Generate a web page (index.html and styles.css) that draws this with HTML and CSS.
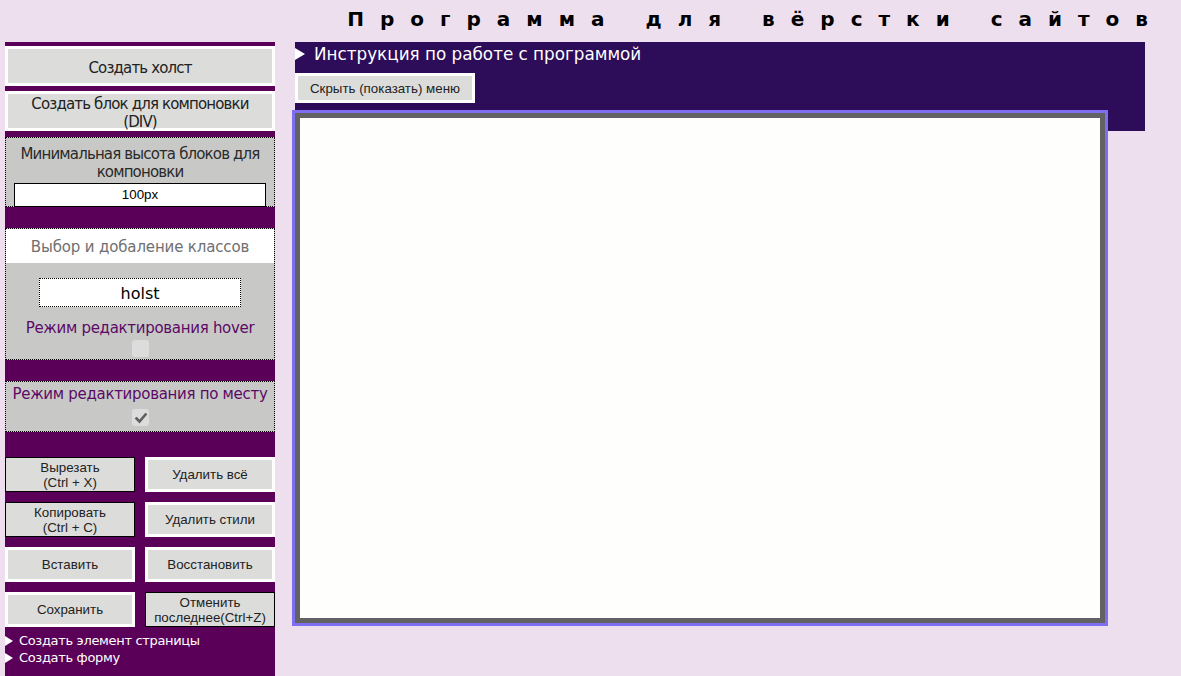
FILE: index.html
```
<!DOCTYPE html>
<html lang="ru">
<head>
<meta charset="utf-8">
<title>Программа для вёрстки сайтов</title>
<link rel="stylesheet" href="styles.css">
</head>
<body>
<div class="page-title">Программа для вёрстки сайтов</div>
<div class="layout">
  <aside class="sidebar">
    <div class="big-btn">Создать холст</div>
    <div class="big-btn two-line">Создать блок для компоновки<br>(DIV)</div>
    <div class="panel panel-height">
      <div class="panel-text">Минимальная высота блоков для компоновки</div>
      <div class="field field-height">100px</div>
    </div>
    <div class="panel panel-classes">
      <div class="panel-head">Выбор и добаление классов</div>
      <div class="field field-class">holst</div>
      <div class="mode-text">Режим редактирования hover</div>
      <span class="check"></span>
    </div>
    <div class="panel panel-place">
      <div class="mode-text">Режим редактирования по месту</div>
      <span class="check checked"><svg viewBox="0 0 16 16" width="16" height="16"><path d="M3.5 8.5 L6.5 11.5 L12.5 4.5" fill="none" stroke="#5e5e5e" stroke-width="2.6" stroke-linecap="square"/></svg></span>
    </div>
    <div class="tools">
      <div class="tool dark">Вырезать<br>(Ctrl + X)</div>
      <div class="tool">Удалить всё</div>
      <div class="tool dark">Копировать<br>(Ctrl + C)</div>
      <div class="tool">Удалить стили</div>
      <div class="tool">Вставить</div>
      <div class="tool">Восстановить</div>
      <div class="tool">Сохранить</div>
      <div class="tool dark">Отменить<br>последнее(Ctrl+Z)</div>
    </div>
    <div class="menu">
      <div class="menu-item"><span class="tri"></span>Создать элемент страницы</div>
      <div class="menu-item"><span class="tri"></span>Создать форму</div>
    </div>
  </aside>
  <main class="main">
    <div class="main-head">
      <div class="main-title"><span class="tri tri-head"></span>Инструкция по работе с программой</div>
      <div class="toggle-btn">Скрыть (показать) меню</div>
      <div class="canvas"></div>
    </div>
  </main>
</div>
</body>
</html>
```
FILE: styles.css
```
html, body {
  margin: 0;
  padding: 0;
}
body {
  background: #eddfee;
  font-family: "DejaVu Sans", Verdana, sans-serif;
  overflow: hidden;
}
.page-title {
  height: 42px;
  box-sizing: border-box;
  padding-top: 6px;
  padding-right: 17px;
  text-align: right;
  font-weight: bold;
  font-size: 20px;
  line-height: 26px;
  letter-spacing: 16px;
  word-spacing: 2px;
  color: #000;
  white-space: nowrap;
}
.layout {
  display: flex;
  align-items: flex-start;
}
.sidebar {
  margin-left: 5px;
  width: 270px;
  background: #5a0058;
  padding-top: 4px;
  padding-bottom: 30px;
  display: flex;
  flex-direction: column;
}
.big-btn {
  height: 40px;
  box-sizing: border-box;
  border: 3px solid #fff;
  background: #dcdddb;
  color: #222;
  font-size: 15px;
  line-height: 18px;
  letter-spacing: -0.85px;
  display: flex;
  align-items: center;
  justify-content: center;
  text-align: center;
  padding-top: 3px;
}
.big-btn + .big-btn {
  margin-top: 5px;
}
.big-btn.two-line {
  padding-top: 4px;
}
.panel {
  background: #c8c9c6;
  border: 1px dotted #000;
  display: flex;
  flex-direction: column;
  align-items: center;
  text-align: center;
}
.panel-height {
  margin-top: 6px;
  height: 70px;
  box-sizing: border-box;
  padding-top: 7px;
}
.panel-text {
  font-size: 15px;
  line-height: 18px;
  letter-spacing: -0.85px;
  color: #2a2a2a;
  padding: 0 2px;
}
.field {
  background: #fff;
  box-sizing: border-box;
  color: #000;
  text-align: center;
}
.field-height {
  margin-top: 2px;
  width: 252px;
  height: 24px;
  border: 1px solid #000;
  font-family: "Liberation Sans", Arial, sans-serif;
  font-size: 13.33px;
  line-height: 22px;
}
.panel-classes {
  margin-top: 21px;
  height: 132px;
  box-sizing: border-box;
}
.panel-head {
  align-self: stretch;
  height: 34px;
  background: #fff;
  color: #6f6f6f;
  font-size: 15px;
  line-height: 36px;
  letter-spacing: -0.15px;
}
.field-class {
  margin-top: 15px;
  width: 202px;
  height: 29px;
  border: 1px dotted #000;
  font-size: 16px;
  line-height: 29px;
}
.mode-text {
  color: #5c0a66;
  font-size: 15px;
  line-height: 18px;
  letter-spacing: -0.3px;
  white-space: nowrap;
}
.panel-classes .mode-text {
  margin-top: 12px;
}
.check {
  display: block;
  width: 17px;
  height: 17px;
  border-radius: 3px;
  background: #dcdcdc;
  margin-top: 3px;
}
.check svg {
  display: block;
  margin: 1px 0 0 1px;
}
.panel-place {
  margin-top: 21px;
  height: 51px;
  box-sizing: border-box;
  padding-top: 3px;
}
.panel-place .check {
  margin-top: 6px;
}
.tools {
  margin-top: 25px;
  display: grid;
  grid-template-columns: 130px 130px;
  grid-auto-rows: 35px;
  column-gap: 10px;
  row-gap: 10px;
}
.tool {
  box-sizing: border-box;
  border: 3px solid #fff;
  background: #dcdddb;
  color: #222;
  font-family: "Liberation Sans", Arial, sans-serif;
  font-size: 13.33px;
  line-height: 15px;
  display: flex;
  align-items: center;
  justify-content: center;
  text-align: center;
}
.tool.dark {
  border: 1px solid #000;
}
.menu {
  margin-top: 5px;
  color: #fff;
  font-size: 13px;
  line-height: 17px;
  letter-spacing: -0.33px;
}
.menu-item {
  display: flex;
  align-items: center;
}
.tri {
  display: inline-block;
  width: 0;
  height: 0;
  border-top: 5px solid transparent;
  border-bottom: 5px solid transparent;
  border-left: 8px solid #fff;
  margin-right: 6px;
}
.main {
  margin-left: 20px;
  width: 850px;
}
.main-head {
  background: #2d0c59;
  height: 89px;
}
.main-title {
  height: 23px;
  display: flex;
  align-items: center;
  color: #fff;
  font-size: 16.8px;
  line-height: 20px;
}
.tri-head {
  border-top-width: 6.5px;
  border-bottom-width: 6.5px;
  border-left-width: 10px;
  margin-right: 9px;
  margin-top: 1px;
}
.toggle-btn {
  margin-top: 8px;
  width: 180px;
  height: 30px;
  box-sizing: border-box;
  border: 3px solid #fff;
  background: #dcdddb;
  color: #222;
  font-family: "Liberation Sans", Arial, sans-serif;
  font-size: 13.33px;
  display: flex;
  align-items: center;
  justify-content: center;
}
.canvas {
  margin-top: 10px;
  width: 800px;
  height: 500px;
  border: 5px solid #616261;
  outline: 3px solid #7e6ff2;
  background: #fefefd;
}
```
